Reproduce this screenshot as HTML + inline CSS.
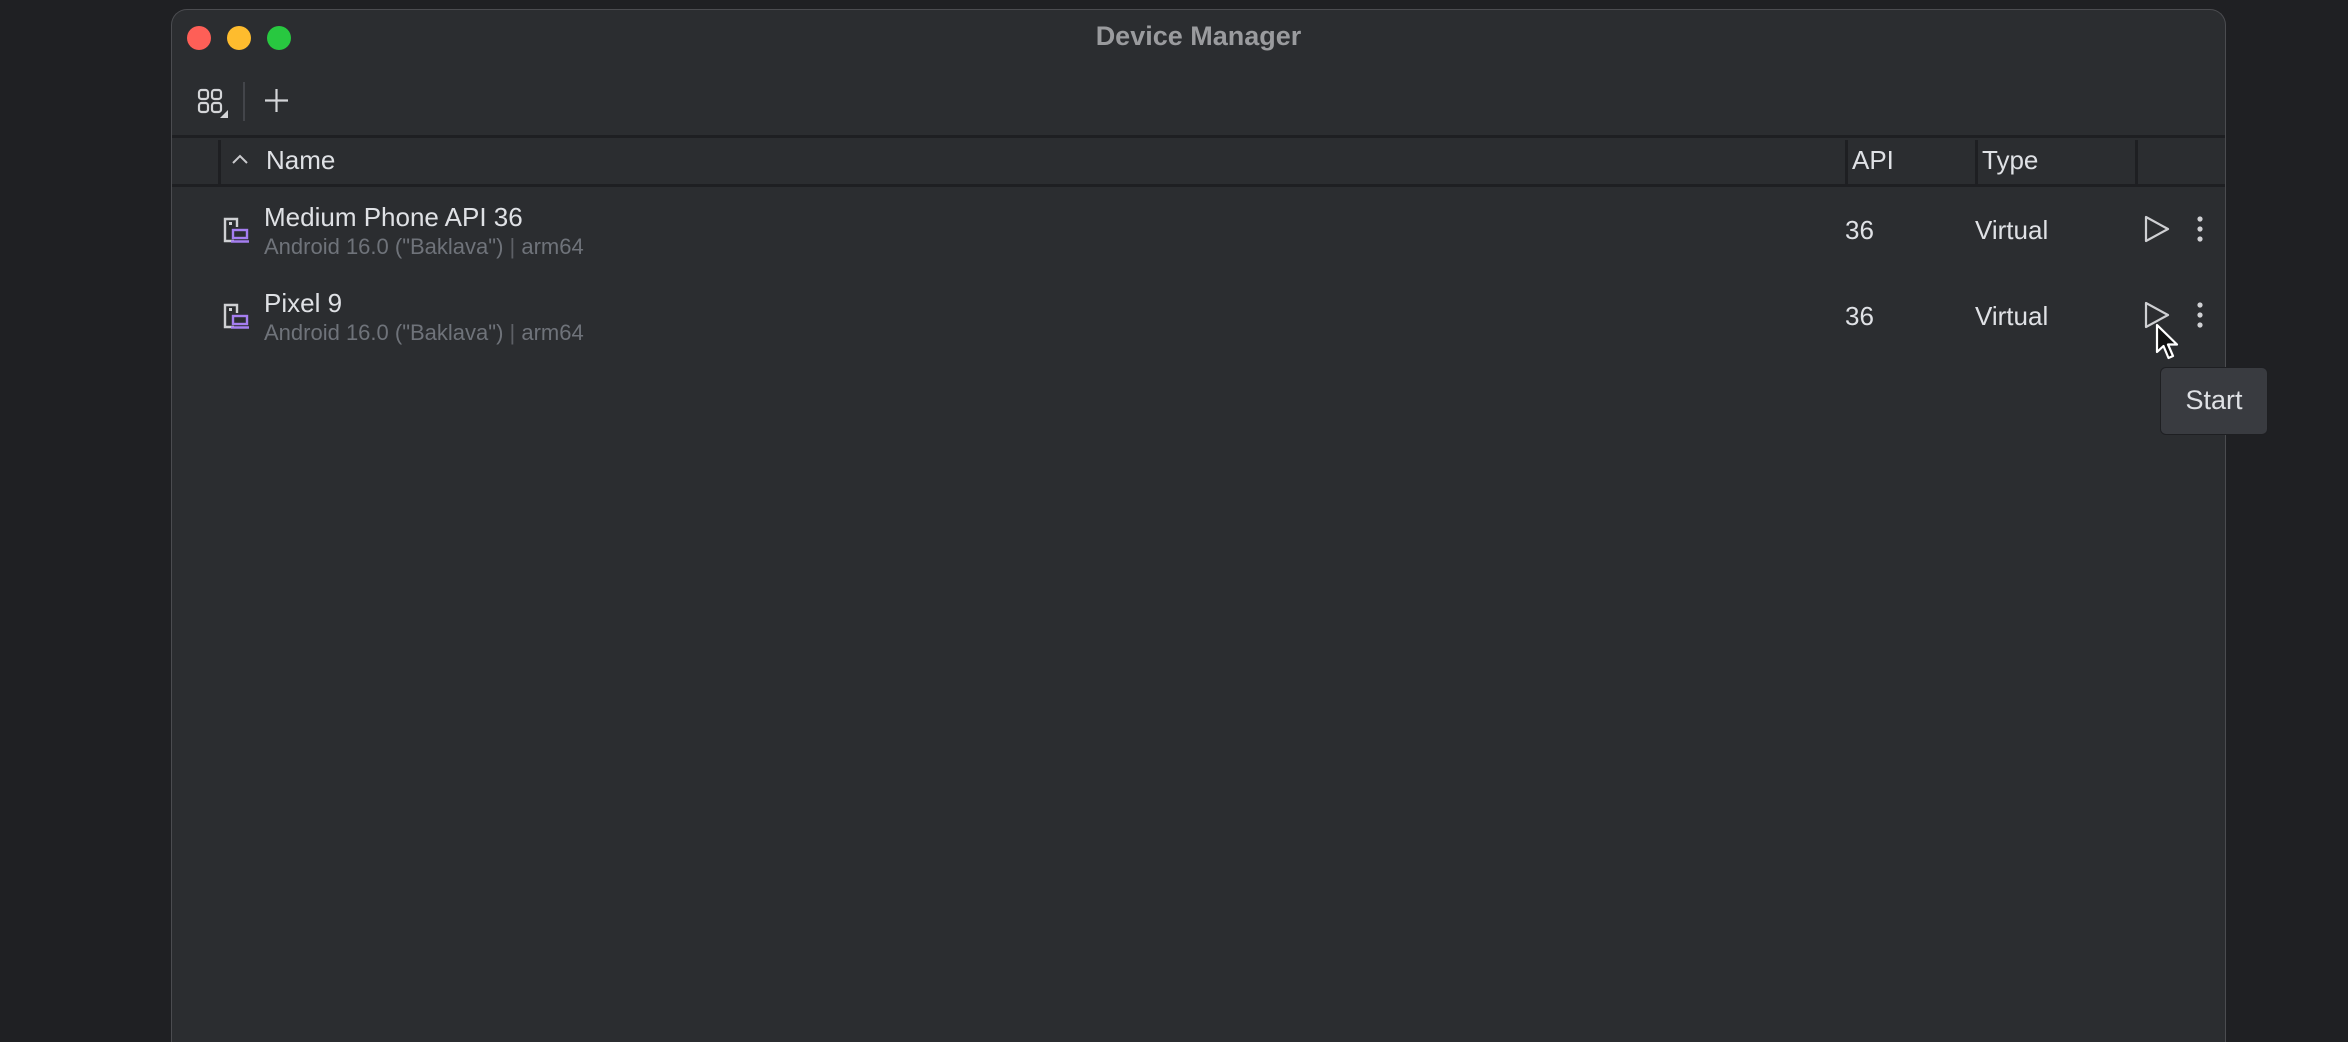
<!DOCTYPE html>
<html style="overflow:hidden"><head><meta charset="utf-8">
<style>
*{margin:0;padding:0;box-sizing:border-box}
html,body{width:2348px;height:1042px;overflow:hidden}
body{background:#1f2023;position:relative;font-family:"Liberation Sans",sans-serif}
.win{position:absolute;left:171px;top:9px;width:2055px;height:1033px;background:#2b2d30;border:1.5px solid #4b4c50;border-bottom:none;border-radius:16px 16px 0 0;overflow:hidden}
.abs{position:absolute}
.tl{position:absolute;top:16px;width:24px;height:24px;border-radius:50%}
.title{position:absolute;left:0;right:0;top:11px;text-align:center;color:#9a9b9e;font-weight:bold;font-size:27px}
.hdr{position:absolute;left:0;right:0;top:125px;height:52px;border-top:3px solid #1e1f22;border-bottom:3px solid #1e1f22;background:#2b2d30}
.vsep{position:absolute;top:2px;width:3px;height:44px;background:#1e1f22}
.ht{position:absolute;top:7px;color:#dfe1e5;font-size:26px}
.rt{position:absolute;color:#dfe1e5;font-size:26px}
.st{position:absolute;color:#6f737a;font-size:22px}
</style></head><body>
<div class="win">
  <div class="tl" style="left:15px;background:#fe5f57"></div>
  <div class="tl" style="left:55px;background:#febc2e"></div>
  <div class="tl" style="left:95px;background:#28c840"></div>
  <div class="title">Device Manager</div>
  <svg class="abs" style="left:0;top:0" width="200" height="125">
    <g fill="none" stroke="#d4d5d8" stroke-width="2.2">
      <rect x="27" y="80" width="9" height="9" rx="2.5"/><rect x="40" y="80" width="9" height="9" rx="2.5"/>
      <rect x="27" y="93" width="9" height="9" rx="2.5"/><rect x="40" y="93" width="9" height="9" rx="2.5"/>
      <path d="M104.5 79V102M93 90.5H116"/>
    </g>
    <path d="M48 108L56 100V108Z" fill="#d4d5d8"/>
    <rect x="71" y="72" width="2" height="39" fill="#43454a"/>
  </svg>
  <div class="hdr">
    <div class="vsep" style="left:46px"></div>
    <svg class="abs" style="left:58px;top:14px" width="20" height="14"><path d="M3 11L10 4L17 11" fill="none" stroke="#c9cacd" stroke-width="2"/></svg>
    <div class="ht" style="left:94px">Name</div>
    <div class="vsep" style="left:1673px"></div>
    <div class="ht" style="left:1680px">API</div>
    <div class="vsep" style="left:1803px"></div>
    <div class="ht" style="left:1810px">Type</div>
    <div class="vsep" style="left:1963px"></div>
  </div>
  <div class="rt" style="left:92px;top:192px">Medium Phone API 36</div>
  <div class="st" style="left:92px;top:224px">Android 16.0 ("Baklava") <span style="color:#5d6066">|</span> arm64</div>
  <div class="rt" style="left:1673px;top:205px">36</div>
  <div class="rt" style="left:1803px;top:205px">Virtual</div>
  <div class="rt" style="left:92px;top:278px">Pixel 9</div>
  <div class="st" style="left:92px;top:310px">Android 16.0 ("Baklava") <span style="color:#5d6066">|</span> arm64</div>
  <div class="rt" style="left:1673px;top:291px">36</div>
  <div class="rt" style="left:1803px;top:291px">Virtual</div>
</div>
<svg class="abs" style="left:0;top:0" width="2348" height="400">
  <g id="dev">
    <path d="M234 241H225V219H237V227" fill="none" stroke="#cfd0d3" stroke-width="2.4"/>
    <rect x="229" y="222" width="3" height="3" fill="#cfd0d3"/>
    <rect x="233" y="230" width="14" height="8" fill="none" stroke="#a57ef0" stroke-width="2.4"/>
    <path d="M231 241.5H249" stroke="#a57ef0" stroke-width="2.4"/>
  </g>
  <use href="#dev" y="86"/>
  <g fill="none" stroke="#cfd0d3" stroke-width="2.2" stroke-linejoin="round">
    <path d="M2146 217V241L2168 229Z"/>
    <path d="M2146 303V327L2168 315Z"/>
  </g>
  <g fill="#cfd0d3">
    <circle cx="2200" cy="219" r="2.6"/><circle cx="2200" cy="229" r="2.6"/><circle cx="2200" cy="239" r="2.6"/>
    <circle cx="2200" cy="305" r="2.6"/><circle cx="2200" cy="315" r="2.6"/><circle cx="2200" cy="325" r="2.6"/>
  </g>
  <path d="M2157 325V352L2163.5 346L2168.5 358L2173 356L2168 344.5H2177Z" fill="#111" stroke="#fff" stroke-width="2.2" stroke-linejoin="round"/>
</svg>
<div class="abs" style="left:2160px;top:367px;width:108px;height:68px;background:#393b40;border:1.5px solid #1e1f22;border-radius:6px;color:#dfe1e5;font-size:27px;text-align:center;line-height:64px">Start</div>
</body></html>
